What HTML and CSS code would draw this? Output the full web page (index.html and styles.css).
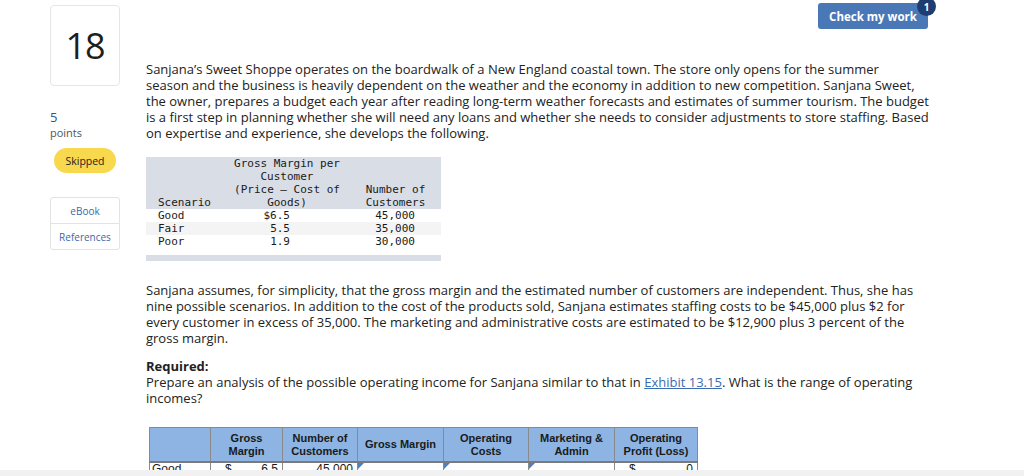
FILE: index.html
```html
<!DOCTYPE html>
<html lang="en">
<head>
<meta charset="utf-8">
<title>Question 18</title>
<link rel="stylesheet" href="styles.css">
</head>
<body>
<div class="page">
  <aside class="side">
    <div class="qnum">18</div>
    <div class="points"><span class="pts-num">5</span><span class="pts-label">points</span></div>
    <div class="status">Skipped</div>
    <div class="resources">
      <div class="res">eBook</div>
      <div class="res">References</div>
    </div>
  </aside>
  <main class="content">
    <div class="topbar">
      <button class="check">Check my work<span class="badge">1</span></button>
    </div>
    <p class="para p1">Sanjana’s Sweet Shoppe operates on the boardwalk of a New England coastal town. The store only opens for the summer<br>season and the business is heavily dependent on the weather and the economy in addition to new competition. Sanjana Sweet,<br>the owner, prepares a budget each year after reading long-term weather forecasts and estimates of summer tourism. The budget<br>is a first step in planning whether she will need any loans and whether she needs to consider adjustments to store staffing. Based<br>on expertise and experience, she develops the following.</p>
    <table class="exhibit">
      <thead>
        <tr>
          <th class="c1">Scenario</th>
          <th class="c2">Gross Margin per<br>Customer<br>(Price – Cost of<br>Goods)</th>
          <th class="c3">Number of<br>Customers</th>
        </tr>
      </thead>
      <tbody>
        <tr><td class="c1">Good</td><td class="c2">$6.5</td><td class="c3">45,000</td></tr>
        <tr class="alt"><td class="c1">Fair</td><td class="c2">5.5</td><td class="c3">35,000</td></tr>
        <tr><td class="c1">Poor</td><td class="c2">1.9</td><td class="c3">30,000</td></tr>
        <tr class="spacer"><td colspan="3"></td></tr>
        <tr class="foot"><td colspan="3"></td></tr>
      </tbody>
    </table>
    <p class="para p2">Sanjana assumes, for simplicity, that the gross margin and the estimated number of customers are independent. Thus, she has nine possible scenarios. In addition to the cost of the products sold, Sanjana estimates staffing costs to be $45,000 plus $2 for every customer in excess of 35,000. The marketing and administrative costs are estimated to be $12,900 plus 3 percent of the gross margin.</p>
    <p class="para req"><strong>Required:</strong><br>Prepare an analysis of the possible operating income for Sanjana similar to that in <a class="link" href="#">Exhibit 13.15</a>. What is the range of operating incomes?</p>
    <table class="answer">
      <thead>
        <tr>
          <th class="a1"></th>
          <th class="a2">Gross<br>Margin</th>
          <th class="a3">Number of<br>Customers</th>
          <th class="a4">Gross Margin</th>
          <th class="a5">Operating<br>Costs</th>
          <th class="a6">Marketing &amp;<br>Admin</th>
          <th class="a7">Operating<br>Profit (Loss)</th>
        </tr>
      </thead>
      <tbody>
        <tr>
          <td class="lbl">Good</td>
          <td class="num"><span class="cur">$</span>6.5</td>
          <td class="num">45,000</td>
          <td class="inp"><span class="tri"></span></td>
          <td class="inp"><span class="tri"></span></td>
          <td class="inp"><span class="tri"></span></td>
          <td class="num"><span class="cur">$</span>0</td>
        </tr>
      </tbody>
    </table>
  </main>
</div>
<div class="footer"></div>
</body>
</html>
```
FILE: styles.css
```css
html, body {
  margin: 0;
  padding: 0;
  background: #ffffff;
  overflow: hidden;
}
body {
  font-family: "Open Sans", "Liberation Sans", sans-serif;
  color: #222222;
}
.page {
  display: flex;
  align-items: flex-start;
  height: 476px;
}
.side {
  margin-left: 50px;
  width: 70px;
  padding-top: 5px;
  display: flex;
  flex-direction: column;
}
.qnum {
  box-sizing: border-box;
  width: 70px;
  height: 81px;
  border: 1px solid #e6e6e6;
  border-radius: 4px;
  display: flex;
  align-items: center;
  justify-content: center;
  font-size: 36px;
  font-weight: 400;
  color: #1e1e1e;
  letter-spacing: -1px;
}
.points {
  display: flex;
  flex-direction: column;
  margin-top: 24px;
  line-height: 15px;
}
.pts-num {
  font-size: 13px;
  color: #2d5593;
}
.pts-label {
  font-size: 11px;
  color: #555555;
}
.status {
  align-self: center;
  margin-top: 8px;
  width: 62px;
  height: 25px;
  border-radius: 13px;
  background: #f8d84c;
  display: flex;
  align-items: center;
  justify-content: center;
  font-size: 10.5px;
  color: #222222;
}
.resources {
  margin-top: 24px;
  border: 1px solid #e3e3e3;
  border-radius: 3px;
  display: flex;
  flex-direction: column;
}
.res {
  height: 25px;
  display: flex;
  align-items: center;
  justify-content: center;
  font-size: 10px;
  color: #3d68a8;
}
.res + .res {
  border-top: 1px solid #e3e3e3;
}
.content {
  margin-left: 26px;
  width: 786px;
  display: flex;
  flex-direction: column;
}
.topbar {
  display: flex;
  justify-content: flex-end;
  padding-top: 3px;
  padding-right: 4px;
}
.check {
  position: relative;
  width: 110px;
  height: 26px;
  border: none;
  border-radius: 3px;
  background: #4a77b6;
  color: #ffffff;
  font-family: "Open Sans", "Liberation Sans", sans-serif;
  font-weight: 700;
  font-size: 11.5px;
  padding: 0;
}
.badge {
  position: absolute;
  top: -6px;
  right: -8px;
  width: 19px;
  height: 19px;
  border-radius: 50%;
  background: #1e3d70;
  color: #ffffff;
  font-size: 10px;
  font-weight: 700;
  display: flex;
  align-items: center;
  justify-content: center;
}
.para {
  margin: 0;
  font-size: 13px;
  line-height: 16px;
  color: #222222;
}
.p1 {
  margin-top: 32px;
  white-space: nowrap;
}
.exhibit {
  align-self: flex-start;
  margin-top: 16px;
  width: 295px;
  border-collapse: collapse;
  font-family: "DejaVu Sans Mono", "Liberation Mono", monospace;
  font-size: 11px;
  line-height: 13px;
  color: #1a1a1a;
}
.exhibit th {
  background: #d9dde6;
  font-weight: 400;
  padding: 0;
  vertical-align: bottom;
}
.exhibit td {
  padding: 0;
  height: 13px;
}
.exhibit .c1 {
  width: 70px;
  text-align: left;
  padding-left: 12px;
}
.exhibit th.c2 {
  text-align: center;
  width: 118px;
}
.exhibit th.c3 {
  text-align: center;
  padding-left: 4px;
}
.exhibit td.c2 {
  text-align: right;
  padding-right: 56px;
}
.exhibit td.c3 {
  text-align: right;
  padding-right: 26px;
}
.exhibit .alt td {
  background: #f4f4f4;
}
.exhibit .spacer td {
  height: 7px;
}
.exhibit .foot td {
  height: 6px;
  background: #d9dde6;
}
.p2 {
  margin-top: 21px;
}
.req {
  margin-top: 12px;
}
.req strong {
  font-weight: 700;
}
.link {
  color: #3a6cb3;
  text-decoration: underline;
}
.answer {
  align-self: flex-start;
  margin-top: 21px;
  margin-left: 3px;
  border-collapse: collapse;
  font-family: "Liberation Sans", Arial, sans-serif;
  font-size: 11px;
  line-height: 13px;
  color: #1a1a1a;
}
.answer th {
  background: #8db4e2;
  font-weight: 700;
  text-align: center;
  height: 33px;
  padding: 0;
  border: 1px solid #8a8a8a;
  border-bottom: 2px solid #7a7a7a;
}
.answer .a1 { width: 60px; }
.answer .a2 { width: 71px; }
.answer .a3 { width: 74px; }
.answer .a4 { width: 85px; }
.answer .a5 { width: 84px; }
.answer .a6 { width: 85px; }
.answer .a7 { width: 82px; }
.answer td {
  height: 18px;
  padding: 0 4px;
  border: 1px solid #8a8a8a;
  vertical-align: top;
  white-space: nowrap;
  font-size: 12px;
}
.answer td.lbl {
  text-align: left;
  padding-left: 2px;
}
.answer td.num {
  text-align: right;
}
.answer .cur {
  float: left;
  padding-left: 10px;
}
.answer td.inp {
  position: relative;
  border-top: 2px solid #4f7fbe;
}
.tri {
  position: absolute;
  top: 0;
  left: 0;
  width: 0;
  height: 0;
  border-top: 6px solid #4f7fbe;
  border-right: 6px solid transparent;
}
.footer {
  position: fixed;
  left: 0;
  right: 0;
  bottom: 0;
  height: 6px;
  background: #f1f1f1;
}
```
